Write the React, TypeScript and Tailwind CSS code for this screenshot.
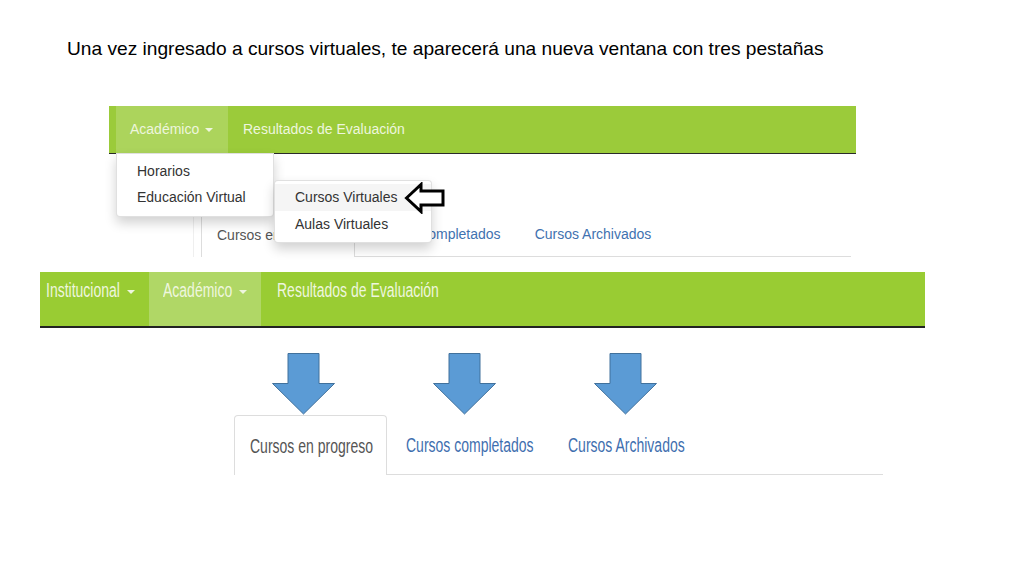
import React from "react";

const Caret = ({ className = "" }: { className?: string }) => (
  <span
    className={`inline-block w-0 h-0 border-l-[4px] border-r-[4px] border-t-[4px] border-l-transparent border-r-transparent border-t-[#eef6de] ${className}`}
  />
);

const Scaled = ({ w, children, className = "" }: { w: number; children: React.ReactNode; className?: string }) => (
  <span className={`inline-block whitespace-nowrap ${className}`} style={{ width: w }}>
    <span className="inline-block origin-left scale-x-[0.7]">{children}</span>
  </span>
);

const BlueArrow = () => (
  <svg width="63" height="62" viewBox="0 0 63 62">
    <polygon
      points="16,0.5 47,0.5 47,30.5 62.5,30.5 31.5,61 0.5,30.5 16,30.5"
      fill="#5b9bd5"
      stroke="#41719c"
      strokeWidth="1"
    />
  </svg>
);

export default function App() {
  return (
    <div className="relative w-[1024px] h-[576px] overflow-hidden bg-white font-['Liberation_Sans',Arial,sans-serif]">
      <div className="pt-[38px] pl-[67px] text-[19.15px] leading-[22px] text-black whitespace-nowrap">
        Una vez ingresado a cursos virtuales, te aparecerá una nueva ventana con tres pestañas
      </div>

      {/* Top screenshot */}
      <div className="relative mt-[46px] ml-[109px] w-[747px]">
        <div className="flex h-[48px] bg-[#9bcb3a] border-b border-[#2a2a2a] text-[14px] text-[#eef6de]">
          <div className="ml-[7px] w-[112px] bg-[#acd45c] pl-[14px] flex items-center">
            <span>Académico</span>
            <Caret className="ml-[6px]" />
          </div>
          <div className="pl-[15px] flex items-center">Resultados de Evaluación</div>
        </div>

        <div className="mt-[58px] ml-[84px] flex h-[45px] border-l border-[#efefef] text-[14px]">
          <div className="w-[7px] border-b border-transparent" />
          <div className="w-[154px] border-l border-r border-t border-[#dddddd] bg-white pl-[15px] flex items-center text-[#555]">
            Cursos en progreso
          </div>
          <div className="w-[496px] border-b border-[#dddddd] flex items-center pl-[18px] gap-[34px] text-[#3f72b0]">
            <span>Cursos completados</span>
            <span>Cursos Archivados</span>
          </div>
        </div>

        {/* Dropdown */}
        <div className="absolute left-[7px] top-[47px] w-[158px] bg-white border border-[rgba(0,0,0,0.12)] rounded-b-[4px] shadow-[0_6px_12px_rgba(0,0,0,0.18)] pt-[4px] pb-[6px] text-[14px] text-[#333]">
          <div className="h-[26px] pl-[20px] flex items-center">Horarios</div>
          <div className="h-[26px] pl-[20px] flex items-center">Educación Virtual</div>
        </div>

        {/* Submenu */}
        <div className="absolute left-[165px] top-[74px] w-[158px] bg-white border border-[rgba(0,0,0,0.12)] rounded-[4px] shadow-[0_6px_12px_rgba(0,0,0,0.18)] pt-[3px] pb-[5px] text-[14px] text-[#333]">
          <div className="h-[27px] pl-[20px] flex items-center bg-[#f5f5f5]">Cursos Virtuales</div>
          <div className="h-[26px] pl-[20px] flex items-center">Aulas Virtuales</div>
        </div>

        {/* Black outline arrow */}
        <svg className="absolute left-[295px] top-[76px]" width="42" height="32" viewBox="0 0 42 32">
          <polygon
            points="2.5,16 17,2.5 17,9 39,9 39,23 17,23 17,29.5"
            fill="white"
            stroke="black"
            strokeWidth="3"
            strokeLinejoin="miter"
          />
        </svg>
      </div>

      {/* Lower screenshot */}
      <div className="mt-[15px] ml-[40px] w-[885px] h-[56px] flex bg-[#99cc33] border-b-2 border-[#222] text-[20px] leading-[24px] text-[#eef6de]">
        <div className="w-[109px] pl-[6px] pt-[6px] flex items-start">
          <Scaled w={75}>Institucional</Scaled>
          <Caret className="ml-[6px] mt-[12px]" />
        </div>
        <div className="w-[112px] bg-[#b0d766] pl-[14px] pt-[6px] flex items-start">
          <Scaled w={70}>Académico</Scaled>
          <Caret className="ml-[6px] mt-[12px]" />
        </div>
        <div className="pl-[16px] pt-[6px]">
          <Scaled w={165}>Resultados de Evaluación</Scaled>
        </div>
      </div>

      <div className="mt-[25px] ml-[272px] flex gap-[98px]">
        <BlueArrow />
        <BlueArrow />
        <BlueArrow />
      </div>

      <div className="ml-[234px] flex h-[60px] text-[20px]">
        <div className="w-[153px] border-l border-r border-t border-[#dddddd] rounded-t-[4px] bg-white pl-[15px] flex items-center text-[#555]">
          <Scaled w={124}>Cursos en progreso</Scaled>
        </div>
        <div className="w-[496px] border-b border-[#dddddd] flex items-center pl-[19px] text-[#3f6faf]">
          <Scaled w={128}>Cursos completados</Scaled>
          <Scaled w={118} className="ml-[34px]">Cursos Archivados</Scaled>
        </div>
      </div>
    </div>
  );
}
